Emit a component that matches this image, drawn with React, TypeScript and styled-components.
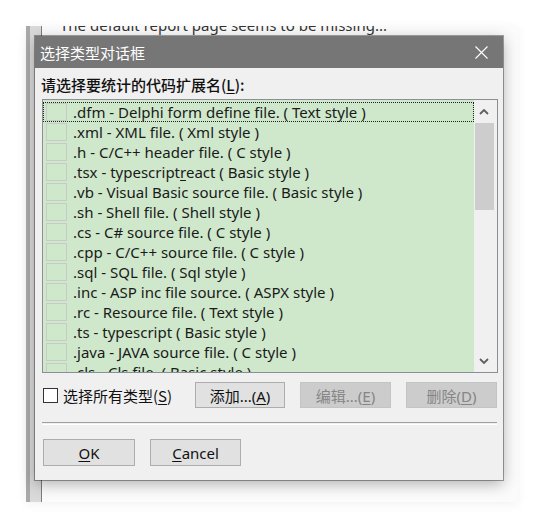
import React from 'react';
import styled, { createGlobalStyle } from 'styled-components';

const GlobalStyle = createGlobalStyle`
  html, body {
    margin: 0;
    padding: 0;
    background: #ffffff;
  }
  body {
    font-family: "Noto Sans", "Noto Sans CJK SC", sans-serif;
  }
`;

const UI_FONT = `"Noto Sans", "Noto Sans CJK SC", sans-serif`;
const CJK_FONT = `"Noto Sans CJK SC", "Noto Sans", sans-serif`;

const Desktop = styled.div`
  position: relative;
  width: 545px;
  height: 528px;
  overflow: hidden;
  background: #ffffff;
`;

const BackWindow = styled.div`
  position: absolute;
  left: 26px;
  top: 26px;
  width: 492px;
  height: 476px;
  display: flex;
  background: #f4f4f4;
  box-shadow: 0 2px 10px rgba(0, 0, 0, 0.06);
`;

const FrameOuter = styled.div`
  width: 4px;
  background: #a9a9a9;
`;

const FrameInner = styled.div`
  width: 11px;
  background: #dadada;
  border-right: 1px solid #7c7c7c;
`;

const BackContent = styled.div`
  flex: 1;
  background: #fbfbfb;
  overflow: hidden;
  padding-left: 18px;
`;

const BackText = styled.div`
  margin-top: -9px;
  font-family: ${UI_FONT};
  font-size: 15px;
  line-height: 16px;
  color: #333;
  white-space: nowrap;
`;

const Dialog = styled.div`
  position: absolute;
  left: 35px;
  top: 36px;
  width: 468px;
  height: 444px;
  display: flex;
  flex-direction: column;
  background: #f0f0f0;
  box-shadow: 0 0 0 1px rgba(0, 0, 0, 0.35), 0 4px 14px rgba(0, 0, 0, 0.3);
`;

const TitleBar = styled.div`
  height: 32px;
  flex: none;
  display: flex;
  align-items: center;
  justify-content: space-between;
  padding: 0 15px 0 5px;
  background: #767676;
  color: #ffffff;
  font-family: ${CJK_FONT};
  font-size: 15px;
`;

const Body = styled.div`
  display: flex;
  flex-direction: column;
  padding: 6px 5px 0 7px;
`;

const Label = styled.div`
  height: 22px;
  line-height: 22px;
  margin: 0 0 3px -1px;
  font-family: ${CJK_FONT};
  font-size: 15px;
  font-weight: 500;
  color: #111;
`;

const Accel = styled.span`
  text-decoration: underline;
  text-underline-offset: 2px;
`;

const ListBox = styled.div`
  height: 274px;
  box-sizing: border-box;
  display: flex;
  border: 1px solid #8a8f96;
  background: #cfe8cb;
`;

const Rows = styled.div`
  flex: 1;
  padding-top: 2px;
  overflow: hidden;
`;

const Row = styled.div<{ $focused?: boolean }>`
  height: 20px;
  box-sizing: border-box;
  display: flex;
  align-items: center;
  border: 1px dotted ${(p) => (p.$focused ? '#222' : 'transparent')};
`;

const Cell = styled.div`
  width: 21px;
  height: 18px;
  box-sizing: border-box;
  margin-left: 2px;
  flex: none;
  border: 1px solid #c5cdc3;
`;

const ItemText = styled.span`
  margin-left: 6px;
  font-family: ${UI_FONT};
  font-size: 15px;
  line-height: 18px;
  color: #1a1a1a;
  white-space: nowrap;
`;

const ScrollBar = styled.div`
  width: 23px;
  flex: none;
  display: flex;
  flex-direction: column;
  background: #f0f0f0;
`;

const ArrowButton = styled.div`
  height: 23px;
  flex: none;
  display: flex;
  align-items: center;
  justify-content: center;
  padding-right: 3px;
`;

const Track = styled.div`
  flex: 1;
  padding: 0 3px 0 1px;
`;

const Thumb = styled.div`
  height: 87px;
  background: #cdcdcd;
`;

const ActionRow = styled.div`
  margin-top: 9px;
  height: 26px;
  display: flex;
  align-items: center;
  justify-content: space-between;
  padding-right: 1px;
`;

const CheckLabel = styled.label`
  display: flex;
  align-items: center;
  margin-left: 1px;
  font-family: ${CJK_FONT};
  font-size: 15px;
  color: #111;
`;

const CheckBox = styled.span`
  width: 15px;
  height: 15px;
  box-sizing: border-box;
  border: 1px solid #333;
  background: #fff;
  margin-right: 5px;
`;

const ButtonGroup = styled.div`
  display: flex;
  gap: 15px;
`;

const Button = styled.button<{ $w: number; $h?: number }>`
  width: ${(p) => p.$w}px;
  height: ${(p) => p.$h ?? 26}px;
  box-sizing: border-box;
  padding: 0;
  border: 1px solid #adadad;
  background: #e1e1e1;
  color: #111;
  font-family: ${UI_FONT};
  font-size: 15px;

  &:disabled {
    background: #cccccc;
    border-color: #c4c4c4;
    color: #858585;
  }
`;

const Separator = styled.div`
  margin-top: 14px;
  height: 1px;
  border-top: 1px solid #a0a0a0;
  border-bottom: 1px solid #ffffff;
  margin-right: 1px;
`;

const Footer = styled.div`
  margin-top: 14px;
  margin-left: 1px;
  display: flex;
  gap: 15px;
`;

const Chevron = ({ down }: { down?: boolean }) => (
  <svg width="10" height="6" viewBox="0 0 10 6">
    <path
      d={down ? 'M1 1 L5 5 L9 1' : 'M1 5 L5 1 L9 5'}
      fill="none"
      stroke="#5f5f5f"
      strokeWidth="1.8"
    />
  </svg>
);

const CloseIcon = () => (
  <svg width="13" height="13" viewBox="0 0 13 13">
    <path d="M0.5 0.5 L12.5 12.5 M12.5 0.5 L0.5 12.5" stroke="#fff" strokeWidth="1.1" />
  </svg>
);

const items: React.ReactNode[] = [
  '.dfm - Delphi form define file. ( Text style )',
  '.xml - XML file. ( Xml style )',
  '.h - C/C++ header file. ( C style )',
  <>
    .tsx - typescript<Accel>r</Accel>eact ( Basic style )
  </>,
  '.vb - Visual Basic source file. ( Basic style )',
  '.sh - Shell file. ( Shell style )',
  '.cs - C# source file. ( C style )',
  '.cpp - C/C++ source file. ( C style )',
  '.sql - SQL file. ( Sql style )',
  '.inc - ASP inc file source. ( ASPX style )',
  '.rc - Resource file. ( Text style )',
  '.ts - typescript ( Basic style )',
  '.java - JAVA source file. ( C style )',
  '.cls - Cls file. ( Basic style )',
];

export default function App() {
  return (
    <>
      <GlobalStyle />
      <Desktop>
        <BackWindow>
          <FrameOuter />
          <FrameInner />
          <BackContent>
            <BackText>The default report page seems to be missing...</BackText>
          </BackContent>
        </BackWindow>

        <Dialog>
          <TitleBar>
            <span>选择类型对话框</span>
            <CloseIcon />
          </TitleBar>
          <Body>
            <Label>
              请选择要统计的代码扩展名(<Accel>L</Accel>):
            </Label>
            <ListBox>
              <Rows>
                {items.map((item, i) => (
                  <Row key={i} $focused={i === 0}>
                    <Cell />
                    <ItemText>{item}</ItemText>
                  </Row>
                ))}
              </Rows>
              <ScrollBar>
                <ArrowButton>
                  <Chevron />
                </ArrowButton>
                <Track>
                  <Thumb />
                </Track>
                <ArrowButton>
                  <Chevron down />
                </ArrowButton>
              </ScrollBar>
            </ListBox>
            <ActionRow>
              <CheckLabel>
                <CheckBox />
                选择所有类型(<Accel>S</Accel>)
              </CheckLabel>
              <ButtonGroup>
                <Button $w={90}>
                  添加...(<Accel>A</Accel>)
                </Button>
                <Button $w={91} disabled>
                  编辑...(<Accel>E</Accel>)
                </Button>
                <Button $w={91} disabled>
                  删除(<Accel>D</Accel>)
                </Button>
              </ButtonGroup>
            </ActionRow>
            <Separator />
            <Footer>
              <Button $w={92} $h={27}>
                <Accel>O</Accel>K
              </Button>
              <Button $w={91} $h={27}>
                <Accel>C</Accel>ancel
              </Button>
            </Footer>
          </Body>
        </Dialog>
      </Desktop>
    </>
  );
}
